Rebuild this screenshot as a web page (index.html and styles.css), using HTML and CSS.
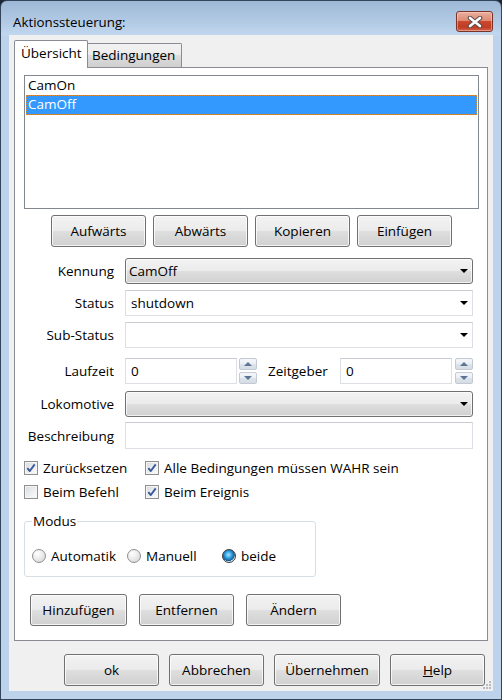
FILE: index.html
```html
<!DOCTYPE html>
<html lang="de">
<head>
<meta charset="utf-8">
<title>Aktionssteuerung</title>
<link rel="stylesheet" href="styles.css">
</head>
<body>
<div class="window">
  <div class="titlebar">
    <span class="title">Aktionssteuerung:</span>
    <div class="close">
      <svg width="16" height="12" viewBox="0 0 16 12">
        <path d="M3 2 L13 10 M13 2 L3 10" stroke="#5b4a4a" stroke-width="4.6" stroke-linecap="round"/>
        <path d="M3 2 L13 10 M13 2 L3 10" stroke="#ffffff" stroke-width="2.6" stroke-linecap="round"/>
      </svg>
    </div>
  </div>
  <div class="client">
    <div class="tabs">
      <div class="tab active">Übersicht</div>
      <div class="tab">Bedingungen</div>
    </div>
    <div class="panel">
      <div class="list">
        <div class="item">CamOn</div>
        <div class="item sel">CamOff</div>
      </div>
      <div class="btnrow toprow">
        <div class="btn">Aufwärts</div>
        <div class="btn">Abwärts</div>
        <div class="btn">Kopieren</div>
        <div class="btn">Einfügen</div>
      </div>
      <div class="row r1">
        <span class="lbl">Kennung</span>
        <div class="combo ro"><span class="val">CamOff</span><i class="arrow"></i></div>
      </div>
      <div class="row r2">
        <span class="lbl">Status</span>
        <div class="combo ed"><span class="val">shutdown</span><i class="arrow"></i></div>
      </div>
      <div class="row r3">
        <span class="lbl">Sub-Status</span>
        <div class="combo ed"><span class="val"></span><i class="arrow"></i></div>
      </div>
      <div class="row r4">
        <span class="lbl">Laufzeit</span>
        <div class="field num"><span class="val">0</span></div>
        <div class="spin s1"><div class="sb"><i class="up"></i></div><div class="sb"><i class="dn"></i></div></div>
        <span class="lbl2">Zeitgeber</span>
        <div class="field num"><span class="val">0</span></div>
        <div class="spin s2"><div class="sb"><i class="up"></i></div><div class="sb"><i class="dn"></i></div></div>
      </div>
      <div class="row r5">
        <span class="lbl">Lokomotive</span>
        <div class="combo ro"><span class="val"></span><i class="arrow"></i></div>
      </div>
      <div class="row r6">
        <span class="lbl">Beschreibung</span>
        <div class="field wide"></div>
      </div>
      <div class="checks">
        <div class="chk c1"><span class="box on"></span>Zurücksetzen</div>
        <div class="chk"><span class="box on"></span>Alle Bedingungen müssen WAHR sein</div>
        <div class="chk c1"><span class="box"></span>Beim Befehl</div>
        <div class="chk"><span class="box on"></span>Beim Ereignis</div>
      </div>
      <fieldset class="group">
        <legend>Modus</legend>
        <div class="radios">
          <div class="rad"><span class="circle"></span>Automatik</div>
          <div class="rad"><span class="circle"></span>Manuell</div>
          <div class="rad"><span class="circle on"></span>beide</div>
        </div>
      </fieldset>
      <div class="btnrow actrow">
        <div class="btn w97">Hinzufügen</div>
        <div class="btn">Entfernen</div>
        <div class="btn">Ändern</div>
      </div>
    </div>
    <div class="dlgbtns">
      <div class="btn">ok</div>
      <div class="btn">Abbrechen</div>
      <div class="btn w106">Übernehmen</div>
      <div class="btn"><u>H</u>elp</div>
    </div>
    <svg class="grip" width="9" height="9" viewBox="0 0 9 9">
      <g fill="#b9bcc2">
        <rect x="7" y="1" width="2" height="2"/>
        <rect x="4" y="4" width="2" height="2"/><rect x="7" y="4" width="2" height="2"/>
        <rect x="1" y="7" width="2" height="2"/><rect x="4" y="7" width="2" height="2"/><rect x="7" y="7" width="2" height="2"/>
      </g>
    </svg>
  </div>
</div>
</body>
</html>
```

FILE: styles.css
```css
html, body {
  margin: 0;
  padding: 0;
}
body {
  width: 502px;
  height: 700px;
  overflow: hidden;
  background: #1d2733;
  font-family: "Open Sans", "Noto Sans", sans-serif;
  font-size: 13.5px;
  color: #000;
}
.window {
  box-sizing: border-box;
  width: 502px;
  height: 700px;
  border: 1px solid #33455a;
  border-radius: 7px 7px 0 0;
  background: linear-gradient(to bottom, #9db8d6 0px, #b3cbe5 22px, #c1d7ee 34px, #bcd3eb 35px, #bcd3eb 100%);
  display: flex;
  flex-direction: column;
  padding: 0 8px 8px 8px;
}
.titlebar {
  height: 34px;
  margin: 0 -8px;
  padding-left: 12px;
  display: flex;
  align-items: flex-start;
  justify-content: space-between;
}
.title {
  margin-top: 11px;
  line-height: 20px;
  font-size: 13.3px;
  color: #000;
}
.close {
  box-sizing: border-box;
  width: 37px;
  height: 21px;
  margin-top: 10px;
  margin-right: 8px;
  border: 1px solid #7b3328;
  border-radius: 3px;
  background: linear-gradient(to bottom, #eab0a0 0%, #de8a73 45%, #c9482f 50%, #c13c25 80%, #d1664b 100%);
  box-shadow: inset 0 0 0 1px rgba(255,220,210,0.45);
  display: flex;
  align-items: center;
  justify-content: center;
}
.client {
  position: relative;
  flex: 1;
  background: #f0f0f0;
  padding: 5px 5px 0 5px;
  display: flex;
  flex-direction: column;
}
.tabs {
  display: flex;
  align-items: flex-end;
  height: 27px;
  position: relative;
  z-index: 1;
}
.tab {
  box-sizing: border-box;
  border: 1px solid #898c95;
  border-bottom: none;
  line-height: 22px;
  white-space: nowrap;
}
.tab.active {
  width: 74px;
  height: 28px;
  margin-bottom: -1px;
  background: #fff;
  padding-left: 6px;
  padding-top: 1px;
  border-radius: 2px 2px 0 0;
}
.tab:not(.active) {
  width: 94px;
  height: 24px;
  border-left: none;
  padding-left: 4px;
  background: linear-gradient(to bottom, #f2f2f2 0%, #ebebeb 50%, #dddddd 50%, #cfcfcf 100%);
  border-radius: 0 2px 0 0;
}
.panel {
  box-sizing: border-box;
  height: 574px;
  border: 1px solid #898c95;
  background: #fff;
  padding: 7px 8px 0 9px;
  display: flex;
  flex-direction: column;
}
.list {
  box-sizing: border-box;
  height: 134px;
  border: 1px solid #828790;
  padding: 0 1px;
}
.item {
  height: 19px;
  line-height: 19px;
  padding-left: 2px;
  box-sizing: border-box;
}
.item.sel {
  height: 20px;
  background: #3399ff;
  color: #fff;
  border: 1px dotted #d98b3a;
  line-height: 17px;
  padding-left: 1px;
}
.btnrow {
  display: flex;
}
.toprow {
  margin-top: 6px;
  justify-content: center;
  gap: 7px;
}
.btn {
  box-sizing: border-box;
  width: 95px;
  height: 32px;
  border: 1px solid #707070;
  border-radius: 3px;
  background: linear-gradient(to bottom, #f3f3f3 0%, #ebebeb 48%, #dedede 52%, #d0d0d0 100%);
  box-shadow: inset 0 0 0 1px rgba(255,255,255,0.75);
  display: flex;
  align-items: center;
  justify-content: center;
  white-space: nowrap;
  padding-bottom: 1px;
  flex: none;
}
.btn.w97 { width: 97px; }
.btn.w106 { width: 106px; }
.row {
  display: flex;
  align-items: center;
  height: 26px;
}
.r1 { margin-top: 11px; }
.r2 { margin-top: 6px; }
.r3 { margin-top: 6px; }
.r4 { margin-top: 10px; }
.r5 { margin-top: 7px; }
.r6 { margin-top: 5px; height: 27px; }
.lbl {
  width: 90px;
  margin-right: 11px;
  text-align: right;
  white-space: nowrap;
}
.lbl2 {
  width: 72px;
  margin-left: 11px;
  white-space: nowrap;
}
.combo {
  box-sizing: border-box;
  width: 348px;
  height: 100%;
  display: flex;
  align-items: center;
}
.combo.ro {
  border: 1px solid #707070;
  border-radius: 3px;
  background: linear-gradient(to bottom, #f3f3f3 0%, #ebebeb 48%, #dedede 52%, #d0d0d0 100%);
  box-shadow: inset 0 0 0 1px rgba(255,255,255,0.7);
  padding-left: 3px;
}
.combo.ed {
  border: 1px solid #dcdfe3;
  border-top-color: #c9ccd1;
  background: #fff;
  padding-left: 5px;
}
.val {
  padding-bottom: 1px;
}
.arrow {
  margin-left: auto;
  margin-right: 4px;
  width: 0;
  height: 0;
  border-left: 4px solid transparent;
  border-right: 4px solid transparent;
  border-top: 4px solid #000;
}
.field {
  box-sizing: border-box;
  height: 100%;
  border: 1px solid #dcdfe3;
  border-top-color: #c9ccd1;
  background: #fff;
  display: flex;
  align-items: center;
  padding-left: 5px;
}
.field.num { width: 112px; }
.field.wide { width: 348px; }
.spin {
  width: 18px;
  height: 26px;
  display: flex;
  flex-direction: column;
  justify-content: space-between;
}
.s1 { margin-left: 2px; }
.s2 { margin-left: 3px; }
.sb {
  box-sizing: border-box;
  height: 12px;
  border: 1px solid #c3cad3;
  border-radius: 2px;
  background: linear-gradient(to bottom, #f5f7fa 0%, #e9eef3 50%, #dde3ea 51%, #d6dde6 100%);
  display: flex;
  align-items: center;
  justify-content: center;
}
.sb i {
  width: 0;
  height: 0;
  border-left: 4px solid transparent;
  border-right: 4px solid transparent;
}
.sb .up { border-bottom: 4px solid #5d7396; }
.sb .dn { border-top: 4px solid #5d7396; }
.checks {
  margin-top: 9px;
  display: grid;
  grid-template-columns: 121px auto;
  row-gap: 4px;
}
.chk {
  height: 20px;
  display: flex;
  align-items: center;
  white-space: nowrap;
}
.box {
  box-sizing: border-box;
  width: 14px;
  height: 14px;
  margin-right: 5px;
  border: 1px solid #8e8f8f;
  background: linear-gradient(135deg, #d7d9dd 0%, #eceef0 55%, #fbfbfb 100%);
  box-shadow: inset 0 0 0 1px #f4f4f4;
  flex: none;
}
.box.on {
  background:
    url("data:image/svg+xml;utf8,<svg xmlns='http://www.w3.org/2000/svg' width='12' height='12' viewBox='0 0 12 12'><path d='M2.3 6.2 L4.8 9 L9.7 2.4' fill='none' stroke='%233a5a9a' stroke-width='1.9' stroke-linejoin='round'/></svg>") center / 12px 12px no-repeat,
    linear-gradient(135deg, #d7d9dd 0%, #eceef0 55%, #fbfbfb 100%);
}
.group {
  box-sizing: border-box;
  width: 292px;
  margin: 10px 0 0 0;
  padding: 0 7px 10px 7px;
  border: 1px solid #d5dfe5;
  border-radius: 3px;
  min-width: 0;
}
.group legend {
  padding: 0 1px;
  line-height: 18px;
}
.radios {
  display: flex;
  margin-top: 16px;
  height: 20px;
}
.rad {
  width: 95px;
  flex: none;
  display: flex;
  align-items: center;
  white-space: nowrap;
}
.circle {
  box-sizing: border-box;
  width: 14px;
  height: 14px;
  margin-right: 5px;
  border-radius: 50%;
  border: 1px solid #8e8f8f;
  background: radial-gradient(circle at 35% 30%, #ffffff 0%, #eeeeee 40%, #cfd1d4 100%);
  flex: none;
}
.circle.on {
  border-color: #3c3c3c;
  background:
    radial-gradient(circle at 45% 40%, #a8e4ff 0%, #2f9fe0 35%, #135a92 62%, transparent 66%),
    radial-gradient(circle at 35% 30%, #ffffff 0%, #eeeeee 40%, #cfd1d4 100%);
}
.actrow {
  margin-top: 17px;
  padding-left: 6px;
  gap: 12px;
}
.dlgbtns {
  margin-top: 13px;
  display: flex;
  justify-content: flex-end;
  gap: 10px;
  padding-right: 3px;
}
.grip {
  position: absolute;
  right: 2px;
  bottom: 2px;
}
```
